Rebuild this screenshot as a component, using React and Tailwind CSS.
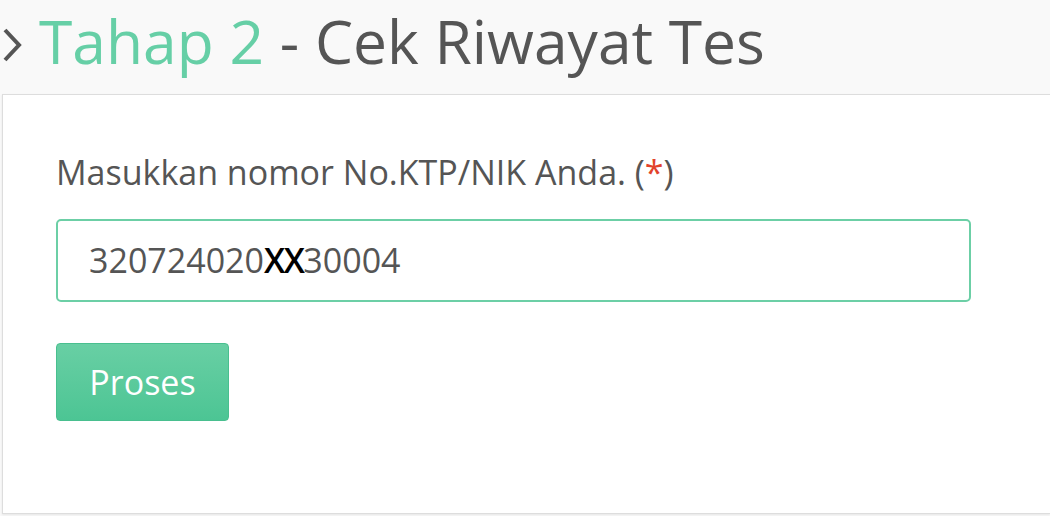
export default function App() {
  return (
    <div className="w-[1050px] h-[516px] overflow-hidden bg-[#f9f9f9] font-['Open_Sans',sans-serif]">
      <div className="flex items-center h-[94px] pb-[12px]">
        <svg width="22" height="36" viewBox="0 0 22 36" className="ml-[1px] mr-[16px] mt-[8px]">
          <path d="M4 3 L18 18 L4 33" fill="none" stroke="#555" strokeWidth="4" />
        </svg>
        <h1 className="text-[60.5px] leading-none text-[#555]">
          <span className="text-[#66cfa6]">Tahap 2</span> - Cek Riwayat Tes
        </h1>
      </div>
      <div className="ml-[2px] h-[420px] bg-white border-t border-l border-b border-[#dddddd] shadow-[0_1px_2px_rgba(0,0,0,0.08)] pl-[53px] pt-[60px]">
        <label className="block text-[34px] leading-none text-[#555]">
          Masukkan nomor No.KTP/NIK Anda. (<span className="text-[#e2432b]">*</span>)
        </label>
        <div className="mt-[30px] w-[915px] h-[83px] border-2 border-[#6ccfa6] rounded-[5px] flex items-center pl-[31px] text-[34px] text-[#555]">
          320724020<span className="text-black font-semibold tracking-[-1.5px]">XX</span>30004
        </div>
        <button className="mt-[41px] w-[173px] h-[78px] rounded-[4px] border border-[#49bf8f] bg-gradient-to-b from-[#68cfa4] to-[#4cc594] text-white text-[34px]">
          Proses
        </button>
      </div>
    </div>
  );
}
